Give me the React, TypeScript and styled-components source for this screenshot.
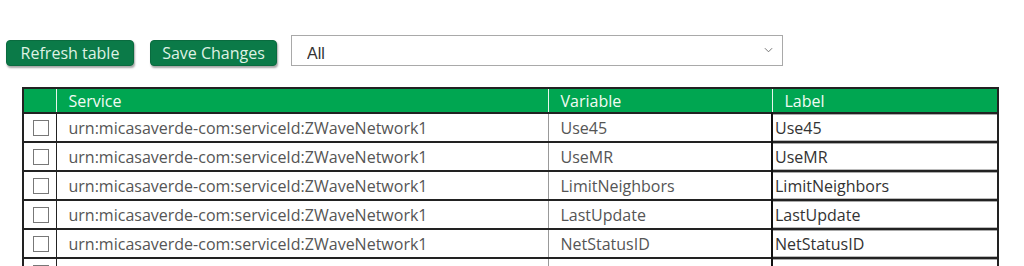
import React, { useState } from 'react';
import styled, { createGlobalStyle } from 'styled-components';

const GlobalStyle = createGlobalStyle`
  html, body {
    margin: 0;
    padding: 0;
    background: #ffffff;
    font-family: 'Open Sans', 'Liberation Sans', sans-serif;
  }
`;

const rows = [
  { service: 'urn:micasaverde-com:serviceId:ZWaveNetwork1', variable: 'Use45', label: 'Use45' },
  { service: 'urn:micasaverde-com:serviceId:ZWaveNetwork1', variable: 'UseMR', label: 'UseMR' },
  { service: 'urn:micasaverde-com:serviceId:ZWaveNetwork1', variable: 'LimitNeighbors', label: 'LimitNeighbors' },
  { service: 'urn:micasaverde-com:serviceId:ZWaveNetwork1', variable: 'LastUpdate', label: 'LastUpdate' },
  { service: 'urn:micasaverde-com:serviceId:ZWaveNetwork1', variable: 'NetStatusID', label: 'NetStatusID' },
  { service: 'urn:micasaverde-com:serviceId:ZWaveNetwork1', variable: 'NetStatusText', label: 'NetStatusText' },
];

const App = () => {
  const [filter, setFilter] = useState('All');

  return (
    <Page>
      <GlobalStyle />
      <Toolbar>
        <ActionButton $width={128}>Refresh table</ActionButton>
        <ActionButton $width={127}>Save Changes</ActionButton>
        <SelectWrap>
          <Select value={filter} onChange={(e) => setFilter(e.target.value)}>
            <option>All</option>
          </Select>
          <Chevron viewBox="0 0 10 6">
            <path d="M1 1 L5 5 L9 1" fill="none" stroke="#666" strokeWidth="1" />
          </Chevron>
        </SelectWrap>
      </Toolbar>

      <Table>
        <colgroup>
          <col style={{ width: 33 }} />
          <col style={{ width: 492 }} />
          <col style={{ width: 224 }} />
          <col style={{ width: 226 }} />
        </colgroup>
        <thead>
          <tr>
            <HeadCell />
            <HeadCell>Service</HeadCell>
            <HeadCell>Variable</HeadCell>
            <HeadCell>Label</HeadCell>
          </tr>
        </thead>
        <tbody>
          {rows.map((row, i) => (
            <Row key={i}>
              <CheckCell>
                <CheckBox />
              </CheckCell>
              <Cell>{row.service}</Cell>
              <Cell $soft>{row.variable}</Cell>
              <LabelCell>
                <LabelInput defaultValue={row.label} />
              </LabelCell>
            </Row>
          ))}
        </tbody>
      </Table>
    </Page>
  );
};

export default App;

const Page = styled.div`
  padding: 35px 0 0 6px;
  height: 266px;
  overflow: hidden;
  box-sizing: border-box;
`;

const Toolbar = styled.div`
  display: flex;
  align-items: flex-start;
  height: 52px;
`;

const ActionButton = styled.button<{ $width: number }>`
  margin-top: 5px;
  margin-right: 16px;
  width: ${({ $width }) => $width}px;
  height: 26px;
  padding: 0;
  background: #0b7a48;
  color: #dff2e4;
  border: 1px solid #0a6b3f;
  border-radius: 4px;
  box-shadow: 1px 2px 2px rgba(0, 0, 0, 0.35);
  font-family: 'Open Sans', 'Liberation Sans', sans-serif;
  font-size: 16px;
  line-height: 24px;
  cursor: pointer;
`;

const SelectWrap = styled.div`
  position: relative;
  margin-left: -2px;
`;

const Select = styled.select`
  appearance: none;
  width: 492px;
  height: 31px;
  padding: 6px 15px 0;
  border: 1px solid #a9a9a9;
  background: #ffffff;
  color: #333;
  font-family: 'Liberation Sans', Arial, sans-serif;
  font-size: 16px;
`;

const Chevron = styled.svg`
  position: absolute;
  right: 10px;
  top: 12px;
  width: 9px;
  height: 6px;
  pointer-events: none;
`;

const Table = styled.table`
  margin-left: 16px;
  width: 975px;
  table-layout: fixed;
  border-collapse: collapse;
  border: 2px solid #222;
  font-family: 'Open Sans', 'Liberation Sans', sans-serif;
  font-size: 16px;
`;

const HeadCell = styled.th`
  background: #00a651;
  color: #f2fbf4;
  font-weight: 400;
  text-align: left;
  height: 23px;
  padding: 0 0 0 12px;
  line-height: 22px;
  border-left: 1px solid #e8f5ec;
  border-bottom: 1px solid #222;
  &:first-child {
    border-left: none;
  }
`;

const Row = styled.tr`
  height: 28px;
  border-top: 2px solid #222;
`;

const Cell = styled.td<{ $soft?: boolean }>`
  padding: 0 0 0 12px;
  color: #555;
  white-space: nowrap;
  line-height: 20px;
  border-left: 1px solid ${({ $soft }) => ($soft ? '#999' : '#222')};
`;

const CheckCell = styled.td`
  padding: 0 0 0 9px;
  vertical-align: middle;
`;

const CheckBox = styled.span`
  display: block;
  width: 14px;
  height: 14px;
  border: 1px solid #777;
  background: #fff;
`;

const LabelCell = styled.td`
  padding: 0;
  border-left: 2px solid #111;
`;

const LabelInput = styled.input`
  display: block;
  width: 100%;
  height: 27px;
  box-sizing: border-box;
  border: none;
  border-top: 1px solid #aaa;
  border-bottom: 1px solid #bbb;
  padding: 0 2px;
  font-family: 'Open Sans', 'Liberation Sans', sans-serif;
  font-size: 16px;
  color: #333;
  background: #fff;
  outline: none;
`;
